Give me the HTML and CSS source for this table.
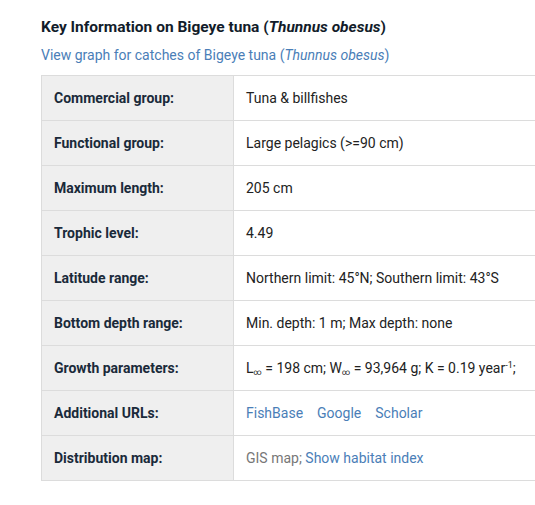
FILE: index.html
```html
<!DOCTYPE html>
<html>
<head>
<meta charset="utf-8">
<link rel="stylesheet" href="styles.css">
</head>
<body>
<div class="page">
  <h2 class="title">Key Information on Bigeye tuna (<i>Thunnus obesus</i>)</h2>
  <a class="graph-link" href="#">View graph for catches of Bigeye tuna (<i>Thunnus obesus</i>)</a>
  <div class="table-wrap">
  <table class="info">
    <tr><th>Commercial group:</th><td>Tuna &amp; billfishes</td></tr>
    <tr><th>Functional group:</th><td>Large pelagics (&gt;=90 cm)</td></tr>
    <tr><th>Maximum length:</th><td>205 cm</td></tr>
    <tr><th>Trophic level:</th><td>4.49</td></tr>
    <tr><th>Latitude range:</th><td>Northern limit: 45°N; Southern limit: 43°S</td></tr>
    <tr><th>Bottom depth range:</th><td>Min. depth: 1 m; Max depth: none</td></tr>
    <tr><th>Growth parameters:</th><td>L<sub>∞</sub> = 198 cm; W<sub>∞</sub> = 93,964 g; K = 0.19 year<sup>-1</sup>;</td></tr>
    <tr><th>Additional URLs:</th><td><a href="#">FishBase</a><a href="#">Google</a><a href="#">Scholar</a></td></tr>
    <tr><th>Distribution map:</th><td><span class="muted">GIS map;</span> <a class="plain" href="#">Show habitat index</a></td></tr>
  </table>
  </div>
</div>
</body>
</html>
```
FILE: styles.css
```css
html, body {
  margin: 0;
  padding: 0;
  overflow: hidden;
  background: #fff;
}
body {
  font-family: Roboto, "Liberation Sans", sans-serif;
  color: #1c2a39;
}
.page {
  padding: 17px 0 0 41px;
}
.title {
  margin: 0;
  font-size: 15.5px;
  font-weight: 700;
  line-height: 20px;
  color: #121c2a;
}
.graph-link {
  display: block;
  margin-top: 8px;
  font-size: 14px;
  line-height: 20px;
  color: #4a7eb7;
  text-decoration: none;
}
.table-wrap {
  margin-top: 10px;
  width: 494px;
  overflow: hidden;
}
.info {
  border-collapse: collapse;
  width: 540px;
  font-size: 14px;
}
.info th, .info td {
  border: 1px solid #dcdcdc;
  height: 44px;
  padding: 0 12px;
  text-align: left;
  vertical-align: middle;
}
.info th {
  width: 167px;
  background: #efefef;
  font-weight: 700;
  color: #1a2a3a;
}
.info td {
  background: #fff;
  color: #222;
}
.info td a {
  color: #4a7eb7;
  text-decoration: none;
  margin-right: 14px;
}
.info td a.plain { margin-right: 0; }
.muted { color: #777; }
sub { font-size: 8px; vertical-align: -2px; line-height: 0; }
sup { font-size: 9px; vertical-align: 5px; line-height: 0; }
```
